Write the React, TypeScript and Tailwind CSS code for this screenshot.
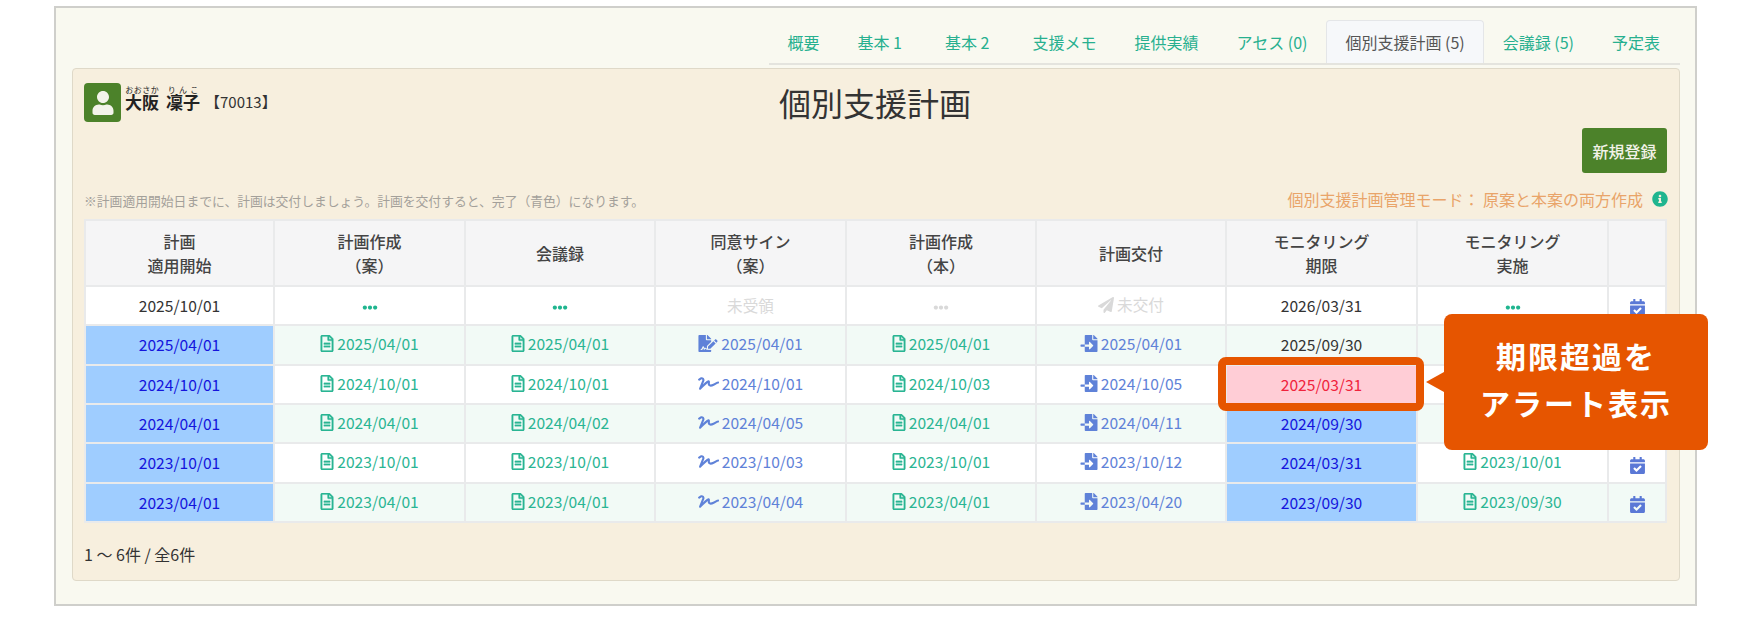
import type { ReactNode } from "react";
import {
  FaCalendarCheck,
  FaEllipsisH,
  FaFileImport,
  FaFileSignature,
  FaInfoCircle,
  FaPaperPlane,
  FaRegFileAlt,
  FaSignature,
  FaUser,
} from "react-icons/fa";

const tabs = ["概要", "基本 1", "基本 2", "支援メモ", "提供実績", "アセス (0)", "個別支援計画 (5)", "会議録 (5)", "予定表"];

const headers: ReactNode[] = [
  <>計画<br />適用開始</>,
  <>計画作成<br />（案）</>,
  "会議録",
  <>同意サイン<br />（案）</>,
  <>計画作成<br />（本）</>,
  "計画交付",
  <>モニタリング<br />期限</>,
  <>モニタリング<br />実施</>,
  "",
];

const Doc = ({ date }: { date: string }) => (
  <span className="inline-flex items-center gap-[3px] text-[#2ab593]">
    <FaRegFileAlt className="w-[14px] h-[17px] [stroke-width:8px]" />
    {date}
  </span>
);

const Blue = ({ icon, date }: { icon: ReactNode; date: string }) => (
  <span className="inline-flex items-center gap-[3px] text-[#5f82d8]">
    {icon}
    {date}
  </span>
);

const Dots = ({ gray }: { gray?: boolean }) => (
  <FaEllipsisH className={`inline-block w-[18px] h-[15px] ${gray ? "text-[#d9d9d9]" : "text-[#1fb58f]"}`} />
);

const edit = <FaFileSignature className="w-[20px] h-[17px]" />;
const sign = <FaSignature className="w-[21px] h-[17px]" />;
const imp = <FaFileImport className="w-[18px] h-[17px]" />;

interface Row {
  start: string;
  plan: string;
  meeting: string;
  signDate: string;
  signIcon: ReactNode;
  main: string;
  issued: string;
  limit: string;
  limitType: "blue" | "plain" | "alert";
  done?: string;
}

const rows: Row[] = [
  { start: "2025/04/01", plan: "2025/04/01", meeting: "2025/04/01", signDate: "2025/04/01", signIcon: edit, main: "2025/04/01", issued: "2025/04/01", limit: "2025/09/30", limitType: "plain" },
  { start: "2024/10/01", plan: "2024/10/01", meeting: "2024/10/01", signDate: "2024/10/01", signIcon: sign, main: "2024/10/03", issued: "2024/10/05", limit: "2025/03/31", limitType: "alert" },
  { start: "2024/04/01", plan: "2024/04/01", meeting: "2024/04/02", signDate: "2024/04/05", signIcon: sign, main: "2024/04/01", issued: "2024/04/11", limit: "2024/09/30", limitType: "blue" },
  { start: "2023/10/01", plan: "2023/10/01", meeting: "2023/10/01", signDate: "2023/10/03", signIcon: sign, main: "2023/10/01", issued: "2023/10/12", limit: "2024/03/31", limitType: "blue", done: "2023/10/01" },
  { start: "2023/04/01", plan: "2023/04/01", meeting: "2023/04/01", signDate: "2023/04/04", signIcon: sign, main: "2023/04/01", issued: "2023/04/20", limit: "2023/09/30", limitType: "blue", done: "2023/09/30" },
];

const td = "border-2 border-[#e9eaeb] text-center p-0";
const cal = <FaCalendarCheck className="inline-block w-[15px] h-[17px] text-[#5a78d6]" />;

export default function App() {
  return (
    <div className="bg-white h-[620px] pl-[54px] pt-[6px] font-['Noto_Sans_CJK_JP',sans-serif] text-[#333]">
      <div className="relative w-[1643px] border-2 border-[#cfcfcb] bg-[#f9f9f0] pl-[16px] pr-[15px] pt-[12px] pb-[23px]">
        {/* Tabs */}
        <div className="flex justify-end h-[45px] ml-[697px] border-b-2 border-[#e4e4de]">
          {tabs.map((tab, i) => (
            <div
              key={tab}
              className={`flex items-center pl-[18px] border border-b-0 rounded-t text-[16px] whitespace-nowrap ${
                i === 1 || i === 2 ? "pr-[23px]" : i === 8 ? "pr-[19px]" : "pr-[18px]"
              } ${i === 6 ? "bg-[#f6f8fa] border-[#e4e6e8] text-[#555]" : "border-transparent text-[#27b08f]"}`}
            >
              {tab}
            </div>
          ))}
        </div>

        {/* Panel */}
        <div className="mt-[3px] border border-[#dfd9c8] rounded bg-[#f7efde] pl-[11px] pr-[13px] pt-[14px] pb-[16px]">
          <div className="grid grid-cols-[1fr_auto_1fr] h-[39px]">
            <div className="flex items-start">
              <div className="flex items-center justify-center w-[37px] h-[39px] rounded bg-[#4c822a]">
                <FaUser className="w-[22px] h-[24px] text-[#f3f3ea]" />
              </div>
              <div className="flex items-end h-[29px] ml-[4px] whitespace-nowrap">
                <span className="text-[17px] leading-[20px] font-semibold text-[#222]">
                  <ruby>大阪<rt className="text-[8px] leading-[8px] font-normal">おおさか</rt></ruby>
                  <span className="inline-block w-[7px]" />
                  <ruby>凜子<rt className="text-[8px] leading-[8px] font-normal">りんこ</rt></ruby>
                </span>
                <span className="ml-[5px] text-[15px] leading-[20px]">【70013】</span>
              </div>
            </div>
            <h1 className="text-[32px] leading-[38px] text-[#333]">個別支援計画</h1>
            <div />
          </div>

          <div className="flex justify-end mt-[6px] -mr-[1px]">
            <button className="w-[85px] h-[45px] rounded-[3px] bg-[#4c822a] text-[16px] font-medium text-[#f2f2e8]">新規登録</button>
          </div>

          <div className="flex items-center justify-between h-[20px] mt-[16px] mb-[10px]">
            <span className="pt-[3px] text-[12.8px] text-[#a3a09a]">※計画適用開始日までに、計画は交付しましょう。計画を交付すると、完了（青色）になります。</span>
            <span className="flex items-center text-[16px] text-[#e9a469]">
              個別支援計画管理モード： 原案と本案の両方作成
              <FaInfoCircle className="ml-[9px] mr-[-2px] w-[16px] h-[16px] text-[#1fb58f]" />
            </span>
          </div>

          {/* Table */}
          <table className="w-[1581px] table-fixed border-collapse text-[15.6px] bg-white">
            <colgroup>
              <col className="w-[189px]" />
              <col className="w-[191px]" />
              <col className="w-[190px]" />
              <col className="w-[191px]" />
              <col className="w-[190px]" />
              <col className="w-[190px]" />
              <col className="w-[191px]" />
              <col className="w-[191px]" />
              <col className="w-[58px]" />
            </colgroup>
            <thead>
              <tr className="h-[66px] bg-[#f5f5f6]">
                {headers.map((h, i) => (
                  <th key={i} className={`${td} text-[16px] font-medium leading-[24px] text-[#444]`}>{h}</th>
                ))}
              </tr>
            </thead>
            <tbody>
              <tr className="h-[39.33px]">
                <td className={td}>2025/10/01</td>
                <td className={td}><Dots /></td>
                <td className={td}><Dots /></td>
                <td className={`${td} text-[#d9d9d9]`}>未受領</td>
                <td className={td}><Dots gray /></td>
                <td className={`${td} text-[#d9d9d9]`}>
                  <span className="inline-flex items-center gap-[3px]"><FaPaperPlane className="w-[16px] h-[16px]" />未交付</span>
                </td>
                <td className={td}>2026/03/31</td>
                <td className={td}><Dots /></td>
                <td className={td}>{cal}</td>
              </tr>
              {rows.map((r, i) => (
                <tr key={r.start} className={`h-[39.33px] ${i % 2 === 0 ? "bg-[#f2faf6]" : "bg-white"}`}>
                  <td className={`${td} bg-[#9fcdff] text-[#1414dc]`}>{r.start}</td>
                  <td className={td}><Doc date={r.plan} /></td>
                  <td className={td}><Doc date={r.meeting} /></td>
                  <td className={td}><Blue icon={r.signIcon} date={r.signDate} /></td>
                  <td className={td}><Doc date={r.main} /></td>
                  <td className={td}><Blue icon={imp} date={r.issued} /></td>
                  {r.limitType === "plain" && <td className={td}>{r.limit}</td>}
                  {r.limitType === "blue" && <td className={`${td} bg-[#9fcdff] text-[#1414dc]`}>{r.limit}</td>}
                  {r.limitType === "alert" && (
                    <td className={`${td} relative bg-[#ffcdd6] text-[#f0233c]`}>
                      {r.limit}
                      <div className="absolute -top-[9px] -bottom-[8px] -left-[9px] -right-[8px] border-[8px] border-[#e65500] rounded-[8px]" />
                    </td>
                  )}
                  <td className={td}>{r.done && <Doc date={r.done} />}</td>
                  <td className={td}>{cal}</td>
                </tr>
              ))}
            </tbody>
          </table>

          <div className="h-[20px] mt-[21px] text-[16px] leading-[20px]">1 〜 6件 / 全6件</div>
        </div>

        {/* Callout */}
        <div className="absolute left-[1388px] top-[306px] flex flex-col items-center justify-center w-[264px] h-[136px] pb-[6px] rounded-[8px] bg-[#e65500] text-white text-[30px] leading-[47px] font-bold tracking-[2px]">
          <div className="absolute -left-[18px] top-[58px] border-y-[10px] border-y-transparent border-r-[18px] border-r-[#e65500]" />
          <span>期限超過を</span>
          <span>アラート表示</span>
        </div>
      </div>
    </div>
  );
}
